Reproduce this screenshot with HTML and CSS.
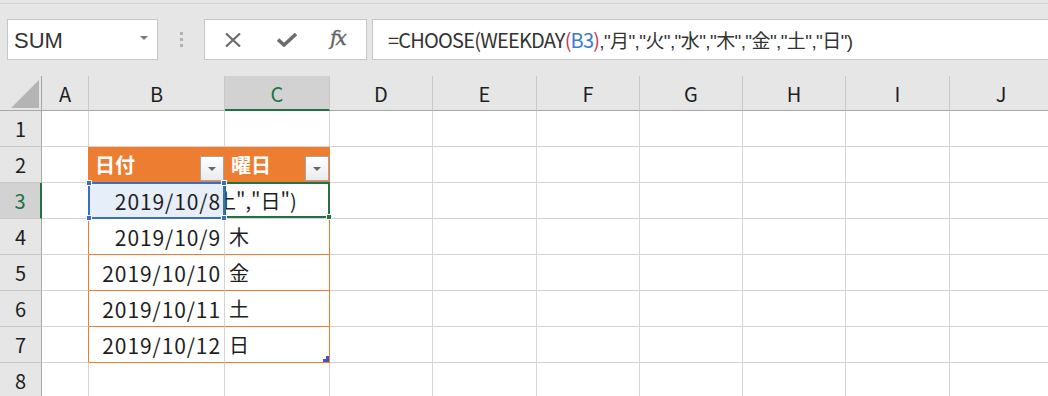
FILE: index.html
```html
<!DOCTYPE html>
<html lang="ja">
<head>
    <meta charset="UTF-8">
    <title>Book1 - Excel</title>
    <link rel="stylesheet" href="styles.css">
</head>
<body>
    <div class="topbar">
        <div class="namebox">
            <span>SUM</span>
            <span class="caret"></span>
        </div>
        <div class="grip"><i></i><i></i><i></i></div>
        <div class="fbtns">
            <svg width="18" height="14" viewBox="0 0 18 14"><path d="M2 0.5 L16 13.5 M16 0.5 L2 13.5" stroke="#6d6d6d" stroke-width="2.2" fill="none"/></svg>
            <svg width="20" height="14" viewBox="0 0 20 14"><path d="M1 6.5 L7 12 L19 1" stroke="#6d6d6d" stroke-width="3.6" fill="none"/></svg>
            <span class="fx">fx</span>
        </div>
        <div class="formula"><span class="fn">=CHOOSE(WEEKDAY<span class="ref-p">(</span><span class="ref">B3</span><span class="ref-p">)</span></span><span class="args">,"月","火","水","木","金","土","日")</span></div>
    </div>

    <div class="sheet">
        <!-- column headers -->
        <div class="corner"><span class="tri"></span></div>
        <div class="hd">A</div>
        <div class="hd">B</div>
        <div class="hd hd-on">C</div>
        <div class="hd">D</div>
        <div class="hd">E</div>
        <div class="hd">F</div>
        <div class="hd">G</div>
        <div class="hd">H</div>
        <div class="hd">I</div>
        <div class="hd">J</div>

        <!-- row 1 -->
        <div class="rh">1</div>
        <div class="c"></div><div class="c"></div><div class="c"></div><div class="c"></div><div class="c"></div>
        <div class="c"></div><div class="c"></div><div class="c"></div><div class="c"></div><div class="c"></div>

        <!-- row 2 -->
        <div class="rh">2</div>
        <div class="c edge"></div>
        <div class="c th">日付<span class="filter"></span></div>
        <div class="c th">曜日<span class="filter"></span></div>
        <div class="c"></div><div class="c"></div><div class="c"></div><div class="c"></div>
        <div class="c"></div><div class="c"></div><div class="c"></div>

        <!-- row 3 -->
        <div class="rh rh-on">3</div>
        <div class="c edge"></div>
        <div class="c date sel">2019/10/8
            <span class="sel-box"><i class="h tl"></i><i class="h tr"></i><i class="h bl"></i><i class="h br"></i></span>
        </div>
        <div class="c tb-r cur"><span class="edit-text">土","日")</span>
            <span class="cur-box"><i class="fill"></i></span>
        </div>
        <div class="c"></div><div class="c"></div><div class="c"></div><div class="c"></div>
        <div class="c"></div><div class="c"></div><div class="c"></div>

        <!-- row 4 -->
        <div class="rh">4</div>
        <div class="c edge"></div>
        <div class="c date tb">2019/10/9</div>
        <div class="c day tb tb-r">木</div>
        <div class="c"></div><div class="c"></div><div class="c"></div><div class="c"></div>
        <div class="c"></div><div class="c"></div><div class="c"></div>

        <!-- row 5 -->
        <div class="rh">5</div>
        <div class="c edge"></div>
        <div class="c date tb">2019/10/10</div>
        <div class="c day tb tb-r">金</div>
        <div class="c"></div><div class="c"></div><div class="c"></div><div class="c"></div>
        <div class="c"></div><div class="c"></div><div class="c"></div>

        <!-- row 6 -->
        <div class="rh">6</div>
        <div class="c edge"></div>
        <div class="c date tb">2019/10/11</div>
        <div class="c day tb tb-r">土</div>
        <div class="c"></div><div class="c"></div><div class="c"></div><div class="c"></div>
        <div class="c"></div><div class="c"></div><div class="c"></div>

        <!-- row 7 -->
        <div class="rh">7</div>
        <div class="c edge"></div>
        <div class="c date tb">2019/10/12</div>
        <div class="c day tb tb-r">日<span class="resize"></span></div>
        <div class="c"></div><div class="c"></div><div class="c"></div><div class="c"></div>
        <div class="c"></div><div class="c"></div><div class="c"></div>

        <!-- row 8 -->
        <div class="rh">8</div>
        <div class="c"></div><div class="c"></div><div class="c"></div><div class="c"></div><div class="c"></div>
        <div class="c"></div><div class="c"></div><div class="c"></div><div class="c"></div><div class="c"></div>
    </div>
</body>
</html>
```

FILE: styles.css
```css
* {
    box-sizing: border-box;
}
body {
    margin: 0;
    width: 1048px;
    height: 396px;
    overflow: hidden;
    background: #e6e6e6;
    font-family: "Noto Sans CJK JP", sans-serif;
    color: #1e1e1e;
}

/* formula bar */
.topbar {
    margin-top: 3px;
    height: 73px;
    border-top: 1px solid #d2d2d2;
    padding-top: 15px;
    display: flex;
    align-items: flex-start;
}
.namebox {
    margin-left: 7px;
    width: 151px;
    height: 41px;
    background: #fff;
    border: 1px solid #c6c6c6;
    display: flex;
    align-items: center;
    justify-content: space-between;
    padding: 2px 9px 0 6px;
    font-family: "Liberation Sans", sans-serif;
    font-size: 22px;
    color: #333;
}
.caret {
    width: 0;
    height: 0;
    border-left: 4px solid transparent;
    border-right: 4px solid transparent;
    border-top: 4px solid #7a7a7a;
    margin-top: -6px;
}
.grip {
    width: 46px;
    height: 41px;
    display: flex;
    flex-direction: column;
    align-items: center;
    justify-content: center;
    gap: 3px;
}
.grip i {
    width: 3px;
    height: 3px;
    background: #b2b2b2;
}
.fbtns {
    width: 163px;
    height: 41px;
    background: #fff;
    border: 1px solid #c6c6c6;
    display: flex;
    align-items: center;
    padding-left: 19px;
    gap: 35px;
}
.fx {
    font-family: "DejaVu Serif", serif;
    font-style: italic;
    font-size: 20px;
    color: #666;
    margin-left: -2px;
    margin-top: -3px;
    letter-spacing: -2px;
    -webkit-text-stroke: 0.4px #666;
}
.formula {
    margin-left: 5px;
    flex: 1;
    height: 41px;
    margin-right: -10px;
    background: #fff;
    border: 1px solid #c6c6c6;
    padding: 0 0 0 15px;
    display: flex;
    align-items: center;
    font-size: 20px;
    color: #333;
    white-space: nowrap;
}
.fn {
    letter-spacing: -0.8px;
}
.args {
    font-family: "Liberation Sans", "Noto Sans CJK JP", sans-serif;
    font-size: 19px;
    letter-spacing: -0.6px;
}
.ref {
    color: #3d7ad6;
}
.ref-p {
    color: #d0384e;
}

/* sheet grid */
.sheet {
    display: grid;
    grid-template-columns: 42px 47px 136px 105px 103px 104px 103px 103px 103px 104px 103px;
    grid-template-rows: 35px repeat(8, 36px);
    width: 1053px;
    background: #fff;
}
.corner {
    background: #e6e6e6;
    border-right: 1px solid #a6a6a6;
    border-bottom: 1px solid #a6a6a6;
    position: relative;
}
.tri {
    position: absolute;
    left: 11px;
    top: 4px;
    width: 28px;
    height: 28px;
    background: #b4b4b4;
    clip-path: polygon(100% 0, 100% 100%, 0 100%);
}
.hd {
    background: #e6e6e6;
    border-right: 1px solid #c8c8c8;
    border-bottom: 1px solid #a6a6a6;
    display: flex;
    align-items: center;
    justify-content: center;
    font-size: 20px;
    padding-top: 1px;
}
.hd-on {
    background: #d2d2d2;
    border-bottom: 2px solid #217346;
    color: #217346;
}
.rh {
    background: #e6e6e6;
    border-right: 1px solid #a6a6a6;
    border-bottom: 1px solid #c8c8c8;
    display: flex;
    align-items: center;
    justify-content: center;
    font-size: 20px;
}
.rh-on {
    background: #d2d2d2;
    border-right: 2px solid #217346;
    color: #217346;
}
.c {
    border-right: 1px solid #d4d4d4;
    border-bottom: 1px solid #d4d4d4;
    display: flex;
    align-items: center;
    font-size: 20px;
    white-space: nowrap;
    position: relative;
}

/* table */
.edge {
    border-right-color: #ed7d31;
}
.th {
    background: #ed7d31;
    border-right-color: #ed7d31;
    border-bottom-color: #ed7d31;
    color: #fff;
    font-weight: bold;
    padding-left: 6px;
    justify-content: space-between;
}
.filter {
    align-self: flex-end;
    margin: 0 0 1px 0;
    width: 24px;
    height: 25px;
    border: 1px solid #a4a4a4;
    background: linear-gradient(#ffffff, #e9ebef);
    position: relative;
}
.filter::after {
    content: "";
    position: absolute;
    left: 7px;
    top: 10px;
    border-left: 4px solid transparent;
    border-right: 4px solid transparent;
    border-top: 4px solid #666;
}
.date {
    justify-content: flex-end;
    padding-right: 3px;
    font-size: 21px;
    letter-spacing: 0.9px;
}
.day {
    padding-left: 4px;
}
.tb {
    border-bottom-color: #ed7d31;
}
.tb-r {
    border-right-color: #ed7d31;
}

/* selection */
.sel {
    background: #e6eef9;
}
.sel-box {
    position: absolute;
    left: -1px;
    top: -1px;
    right: -1px;
    bottom: -1px;
    border: 2px solid #3a6dc4;
    z-index: 2;
}
.h {
    position: absolute;
    width: 6px;
    height: 6px;
    background: #3a6dc4;
    border: 1px solid #fff;
}
.tl { left: -4px; top: -4px; }
.tr { right: -4px; top: -4px; }
.bl { left: -4px; bottom: -4px; }
.br { right: -4px; bottom: -4px; }

.edit-text {
    display: block;
    overflow: hidden;
    width: 100%;
    text-indent: -9px;
}
.cur-box {
    position: absolute;
    left: -1px;
    top: -1px;
    right: -1px;
    bottom: 0;
    border: 2px solid #217346;
    z-index: 1;
}
.fill {
    position: absolute;
    right: -4px;
    bottom: -4px;
    width: 6px;
    height: 6px;
    background: #217346;
    border: 1px solid #fff;
}
.resize {
    position: absolute;
    right: 0;
    bottom: 0;
    width: 6px;
    height: 6px;
    background: #4455c0;
    clip-path: polygon(100% 0, 100% 100%, 0 100%, 0 50%, 50% 50%, 50% 0);
}
```
